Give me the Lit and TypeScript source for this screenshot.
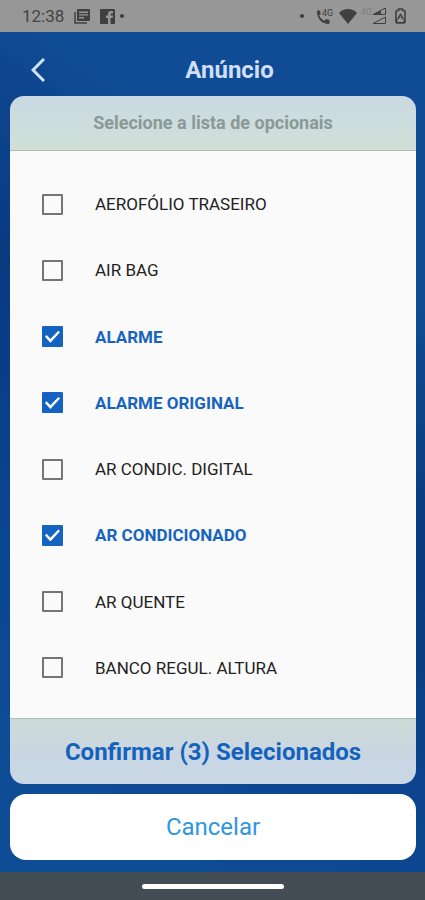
import { LitElement, html, css } from "lit";
import { customElement, state } from "lit/decorators.js";

interface Option {
  name: string;
  selected: boolean;
}

@customElement("status-bar")
class StatusBar extends LitElement {
  static styles = css`
    :host {
      display: flex;
      align-items: center;
      justify-content: space-between;
      height: 32px;
      box-sizing: border-box;
      padding: 0 19px 0 22px;
      background: #979797;
      color: #444;
      font-size: 17px;
    }
    .group {
      display: flex;
      align-items: center;
    }
    .left {
      gap: 10px;
    }
    .right {
      gap: 4px;
    }
    .facebook {
      display: flex;
      align-items: center;
      gap: 5px;
    }
    .dot {
      width: 4px;
      height: 4px;
      border-radius: 50%;
      background: #3c3c3c;
    }
    .right .dot {
      margin-right: 8px;
    }
    svg {
      display: block;
      fill: #404040;
    }
    .tag {
      font: 9px Roboto, sans-serif;
    }
    .faint {
      fill: #808080;
    }
    .line {
      fill: none;
      stroke: #404040;
    }
    .cut {
      fill: #979797;
    }
  `;

  render() {
    return html`
      <div class="group left">
        <span>12:38</span>
        <svg width="16" height="15" viewBox="0 0 16 15" aria-hidden="true">
          <path d="M4 0h11a1 1 0 0 1 1 1v10a1 1 0 0 1-1 1H4a1 1 0 0 1-1-1V1a1 1 0 0 1 1-1z" />
          <path d="M1 3v11h12" class="line" stroke-width="1.5" />
          <path class="cut" d="M5 2.500h9v1.400H5zM5 5.200h9v1.400H5zM5 8h5v1.400H5z" />
        </svg>
        <div class="facebook">
          <svg width="15" height="15" viewBox="0 0 15 15" aria-hidden="true">
            <path d="M1 0h13a1 1 0 0 1 1 1v13a1 1 0 0 1-1 1H1a1 1 0 0 1-1-1V1a1 1 0 0 1 1-1z" />
            <path class="cut" d="M8 15V9H6V6.500h2V5c0-2 1.200-3 3-3h2v2.500h-1.500c-.8 0-1 .4-1 1v1H13L12.600 9h-2.100v6z" />
          </svg>
          <span class="dot"></span>
        </div>
      </div>
      <div class="group right">
        <span class="dot"></span>
        <svg width="19" height="17" viewBox="0 0 19 17" aria-hidden="true">
          <path
            d="M1.500 2.500h2.300l1 3.300-1.600 1.700c1 2.400 2.900 4.200 5.200 5.200l1.700-1.600 3.400 1v3c0 .6-.4.900-1 .900C6 16 1 10.500 1 3.200c0-.4.200-.7.500-.7z"
          />
          <text class="tag" x="6" y="8">4G</text>
        </svg>
        <svg width="18" height="15" viewBox="0 0 18 15" aria-hidden="true">
          <path d="M9 15 0 4C2.500 1.500 5.500 0 9 0s6.500 1.500 9 4z" />
        </svg>
        <svg width="30" height="18" viewBox="0 0 30 18" aria-hidden="true">
          <text class="tag faint" x="0" y="8">4G</text>
          <path class="line" d="M12 7.500h12.500V1z" />
          <path d="M12 7.500h8V3.400z" />
          <path class="line" d="M12 16.500h12.500V10z" />
        </svg>
        <svg width="11" height="16" viewBox="0 0 11 16" aria-hidden="true">
          <path class="line" stroke-width="1.600" d="M3.500 1h4v1.500H9q1 0 1 1V14q0 1-1 1H2q-1 0-1-1V3.500q0-1 1-1h1.500z" />
          <path d="M5.500 5 2.500 10v4h6v-4zM1 11h9v4H1z" />
          <path class="cut" d="M5.500 7.500 4 11h1v2.500L7 10H6z" />
        </svg>
      </div>
    `;
  }
}

@customElement("app-root")
class AppRoot extends LitElement {
  static styles = css`
    :host {
      display: flex;
      flex-direction: column;
      min-height: 100vh;
      font-family: Roboto, sans-serif;
      background: linear-gradient(215deg, #104c95 24%, #083a80 46%, #0b438e 66%, #0f4c96 86%);
    }
    button {
      border: 0;
      margin: 0;
      padding: 0;
      font-family: inherit;
      cursor: pointer;
    }
    .header {
      display: grid;
      grid-template-columns: 64px 1fr;
      align-items: center;
      height: 64px;
      padding: 0 36px 0 6px;
    }
    .back {
      display: flex;
      justify-content: center;
      padding: 24px 0 12px;
      background: none;
    }
    .back path {
      fill: none;
      stroke: #d3e2f5;
      stroke-width: 3;
    }
    h1 {
      margin: 0;
      padding-top: 12px;
      text-align: center;
      font-size: 24px;
      line-height: 28px;
      font-weight: 700;
      color: #cfdff5;
    }
    main {
      flex: 1;
      display: flex;
      flex-direction: column;
      gap: 10px;
      padding: 0 9px 12px 10px;
    }
    .sheet {
      flex: 1;
      display: flex;
      flex-direction: column;
      border-radius: 14px;
      overflow: hidden;
    }
    h2 {
      margin: 0;
      padding: 16px 0;
      text-align: center;
      font-size: 18px;
      line-height: 22px;
      font-weight: 700;
      color: #8b9996;
      background: linear-gradient(#cad9e3, #d0e0d7);
      border-bottom: 1px solid #aebdb8;
    }
    .options {
      flex: 1;
      display: flex;
      flex-direction: column;
      margin: 0;
      padding: 20px 0 17px;
      list-style: none;
      background: #fafafa;
    }
    li {
      flex: 1;
      display: flex;
    }
    label {
      flex: 1;
      display: flex;
      align-items: center;
      gap: 32px;
      min-height: 48px;
      padding: 0 32px;
      font-size: 17px;
      color: #222;
      cursor: pointer;
    }
    label.selected {
      font-weight: 700;
      color: #1764c0;
    }
    input {
      appearance: none;
      display: grid;
      flex: none;
      width: 21px;
      height: 21px;
      margin: 0;
      border: 2px solid #757575;
      border-radius: 1px;
    }
    input:checked {
      border-color: #1463c2;
      background: #1463c2;
    }
    input:checked::before {
      content: "";
      place-self: center;
      width: 15px;
      height: 12px;
      background: #fff;
      clip-path: polygon(0 50%, 11% 37%, 36% 70%, 89% 0, 100% 13%, 36% 100%);
    }
    .confirm {
      height: 66px;
      border-top: 1px solid #aebdb8;
      background: linear-gradient(#ccdad7, #c9d6e3 60%);
      font-size: 24px;
      font-weight: 700;
      color: #1562bd;
    }
    .cancel {
      height: 66px;
      border-radius: 16px;
      background: #fff;
      font-size: 24px;
      color: #2f96e0;
    }
    .navigation {
      display: flex;
      align-items: center;
      justify-content: center;
      height: 28px;
      background: #454d54;
    }
    .handle {
      width: 142px;
      height: 5px;
      border-radius: 3px;
      background: #fff;
    }
  `;

  @state() private options: Option[] = [
    { name: "AEROFÓLIO TRASEIRO", selected: false },
    { name: "AIR BAG", selected: false },
    { name: "ALARME", selected: true },
    { name: "ALARME ORIGINAL", selected: true },
    { name: "AR CONDIC. DIGITAL", selected: false },
    { name: "AR CONDICIONADO", selected: true },
    { name: "AR QUENTE", selected: false },
    { name: "BANCO REGUL. ALTURA", selected: false },
  ];

  private toggle(index: number) {
    this.options = this.options.map((o, i) => (i === index ? { ...o, selected: !o.selected } : o));
  }

  render() {
    const count = this.options.filter((o) => o.selected).length;
    return html`
      <status-bar></status-bar>
      <header class="header">
        <button class="back" aria-label="Voltar">
          <svg width="14" height="24" viewBox="0 0 14 24"><path d="M13 1 2 12l11 11" /></svg>
        </button>
        <h1>Anúncio</h1>
      </header>
      <main>
        <section class="sheet">
          <h2>Selecione a lista de opcionais</h2>
          <ul class="options">
            ${this.options.map(
              (o, i) => html`
                <li>
                  <label class=${o.selected ? "selected" : ""}>
                    <input type="checkbox" .checked=${o.selected} @change=${() => this.toggle(i)} />
                    ${o.name}
                  </label>
                </li>
              `
            )}
          </ul>
          <button class="confirm">Confirmar (${count}) Selecionados</button>
        </section>
        <button class="cancel">Cancelar</button>
      </main>
      <div class="navigation"><span class="handle"></span></div>
    `;
  }
}
